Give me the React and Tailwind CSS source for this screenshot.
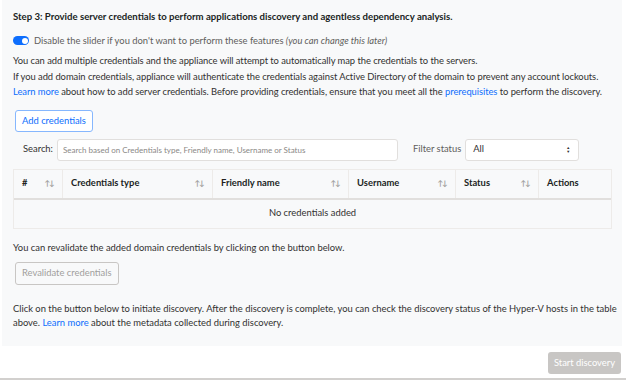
import React, { useState } from 'react';

const SortIcon = () => (
  <span className="text-[7.5px] leading-none text-[#a19f9d] tracking-[-1px]">↑↓</span>
);

const columns = [
  { label: '#', w: 'w-[49px]', sort: true },
  { label: 'Credentials type', w: 'w-[150px]', sort: true },
  { label: 'Friendly name', w: 'w-[136px]', sort: true },
  { label: 'Username', w: 'w-[107px]', sort: true },
  { label: 'Status', w: 'w-[83px]', sort: true },
  { label: 'Actions', w: 'flex-1', sort: false },
];

const App = () => {
  const [enabled, setEnabled] = useState(true);

  return (
    <div className="w-[626px] h-[387px] bg-white text-[9.4px] text-[#323130] font-[Lato,sans-serif] flex flex-col overflow-hidden">
      <div className="mx-[2px] w-[620px] bg-[#f8f9fa] px-[11px] pt-[10px] pb-[15px] whitespace-nowrap">
        <h2 className="font-bold text-[9.6px] text-[#201f1e] leading-[13px]">
          Step 3: Provide server credentials to perform applications discovery and agentless dependency analysis.
        </h2>

        <div className="flex items-center gap-[5px] mt-[11px] leading-[13px]">
          <button
            type="button"
            onClick={() => setEnabled(!enabled)}
            className={`w-[16px] h-[9px] rounded-full flex items-center px-[1.5px] ${enabled ? 'bg-[#0d6efd] justify-end' : 'bg-gray-300 justify-start'}`}
          >
            <span className="w-[6px] h-[6px] rounded-full bg-white" />
          </button>
          <span className="text-[#605e5c]">
            Disable the slider if you don't want to perform these features <i>(you can change this later)</i>
          </span>
        </div>

        <div className="mt-[6px] leading-[15.5px] tracking-[-0.05px]">
          <p>You can add multiple credentials and the appliance will attempt to automatically map the credentials to the servers.</p>
          <p>If you add domain credentials, appliance will authenticate the credentials against Active Directory of the domain to prevent any account lockouts.</p>
          <p>
            <a className="text-[#0d6efd]">Learn more</a> about how to add server credentials. Before providing credentials, ensure that you meet all the{' '}
            <a className="text-[#0d6efd]">prerequisites</a> to perform the discovery.
          </p>
        </div>

        <button
          type="button"
          className="mt-[10px] ml-[2px] h-[22px] px-[6px] border border-[#86b7fe] rounded-[3px] bg-white text-[#0d6efd] leading-none"
        >
          Add credentials
        </button>

        <div className="flex items-center mt-[7px] ml-[10px]">
          <span className="text-[#323130] mr-[4px]">Search:</span>
          <input
            className="w-[341px] h-[22px] bg-white border border-[#e1dfdd] rounded-[3px] px-[5px] text-[8px] outline-none placeholder:text-[#8a8886]"
            placeholder="Search based on Credentials type, Friendly name, Username or Status"
          />
          <span className="ml-[15px] mr-[4px] text-[#605e5c]">Filter status</span>
          <div className="w-[114px] h-[22px] bg-white border border-[#e1dfdd] rounded-[3px] flex items-center justify-between pl-[7px] pr-[8px]">
            <span>All</span>
            <span className="flex flex-col text-[4px] leading-[4px] text-[#323130]">
              <span>▲</span>
              <span>▼</span>
            </span>
          </div>
        </div>

        <div className="mt-[8px] w-[599px] border border-[#edebe9] bg-[#f8f9fa]">
          <div className="flex h-[30px] border-b-2 border-[#e1dfdd]">
            {columns.map((c, i) => (
              <div
                key={c.label}
                className={`${c.w} flex items-center justify-between px-[8px] font-bold text-[#201f1e] ${i < columns.length - 1 ? 'border-r border-[#edebe9]' : ''}`}
              >
                <span>{c.label}</span>
                {c.sort && <SortIcon />}
              </div>
            ))}
          </div>
          <div className="h-[28px] flex items-center justify-center">No credentials added</div>
        </div>

        <p className="mt-[12px] leading-[13px]">You can revalidate the added domain credentials by clicking on the button below.</p>

        <button
          type="button"
          disabled
          className="mt-[8px] ml-[2px] h-[23px] px-[6px] border border-[#c8c6c4] rounded-[3px] bg-[#f8f9fa] text-[#a19f9d] leading-none"
        >
          Revalidate credentials
        </button>

        <div className="mt-[17px] leading-[14.5px]">
          <p>Click on the button below to initiate discovery. After the discovery is complete, you can check the discovery status of the Hyper-V hosts in the table</p>
          <p>
            above. <a className="text-[#0d6efd]">Learn more</a> about the metadata collected during discovery.
          </p>
        </div>
      </div>

      <div className="flex justify-end pr-[5px] mt-[6px]">
        <button
          type="button"
          disabled
          className="h-[22px] px-[6px] rounded-[3px] bg-[#c8c6c4] text-white leading-none"
        >
          Start discovery
        </button>
      </div>

      <div className="mt-auto mb-[7px] h-[2px] bg-[#d2d0ce]" />
    </div>
  );
};

export default App;
